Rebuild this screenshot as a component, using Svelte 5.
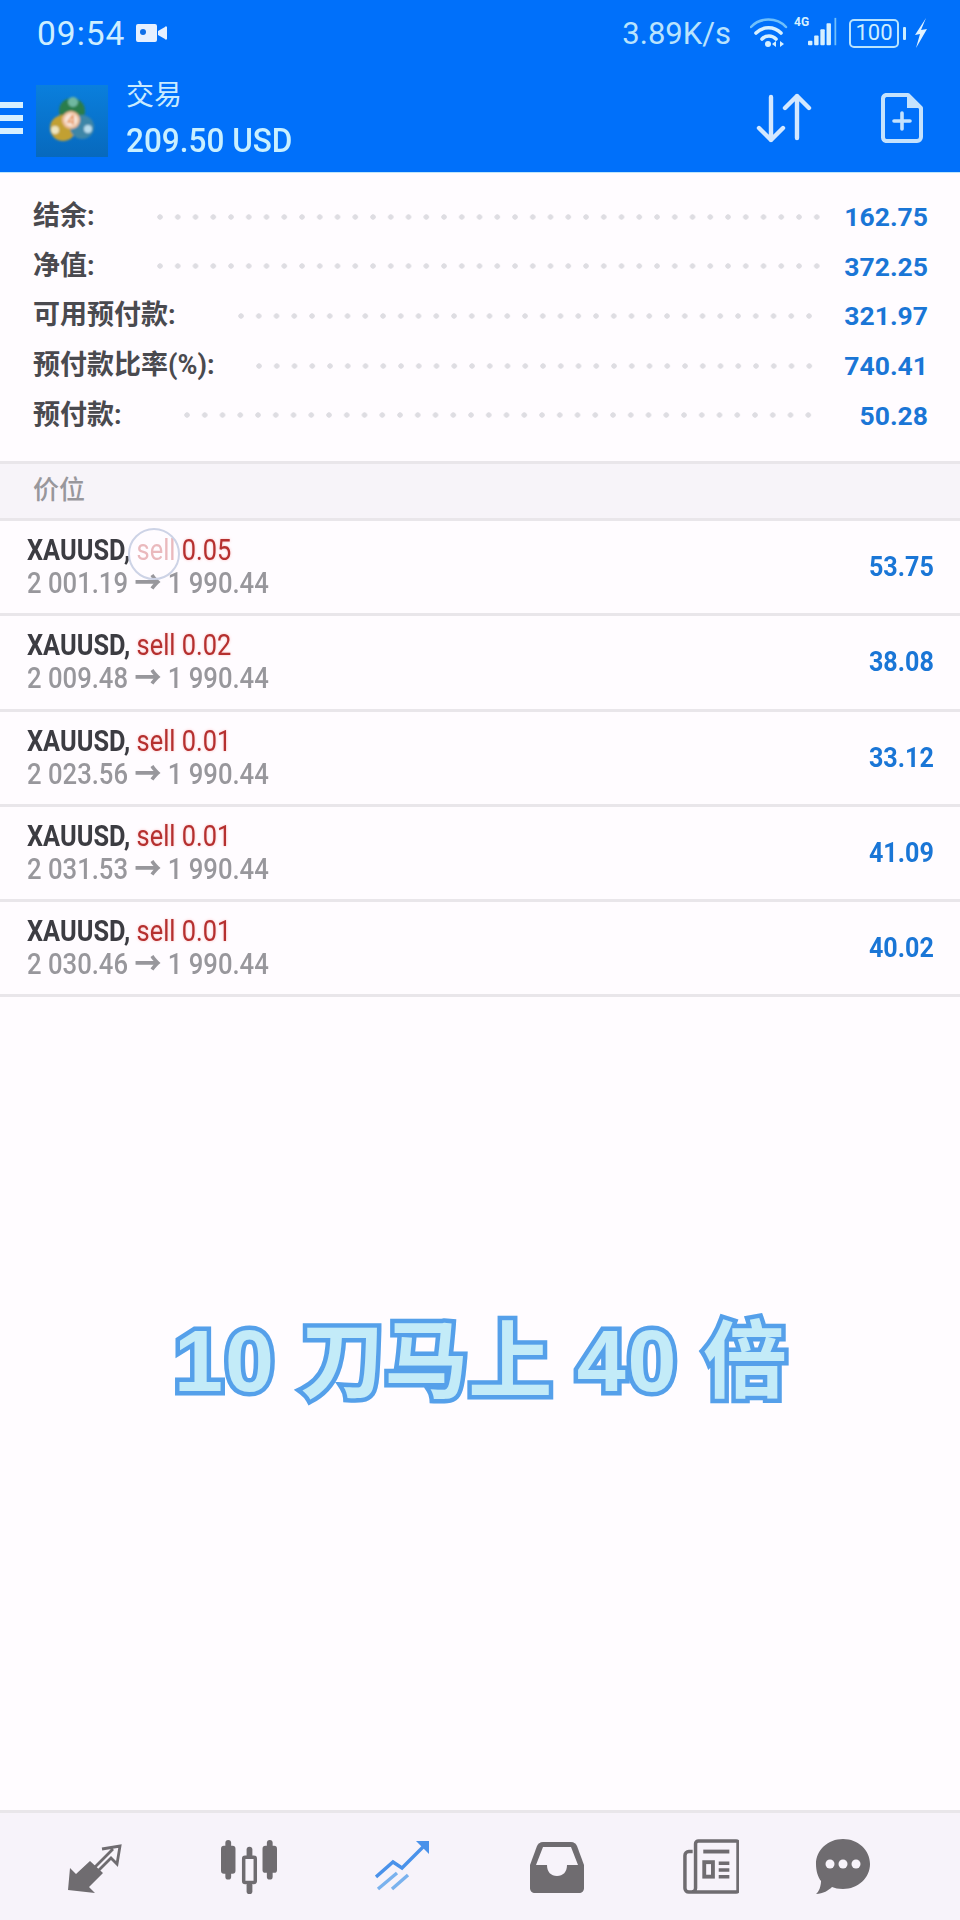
<script>
  const stats = [
    ['结余:', '162.75'],
    ['净值:', '372.25'],
    ['可用预付款:', '321.97'],
    ['预付款比率(%):', '740.41'],
    ['预付款:', '50.28']
  ];
  const trades = [
    ['0.05', '2 001.19', '53.75'],
    ['0.02', '2 009.48', '38.08'],
    ['0.01', '2 023.56', '33.12'],
    ['0.01', '2 031.53', '41.09'],
    ['0.01', '2 030.46', '40.02']
  ];
</script>

<div class="page">
  <header class="top">
    <div class="status">
      <span class="time">09:54</span>
      <svg class="cam" viewBox="0 0 31 18"><path d="M2 0h17a2 2 0 0 1 2 2v14a2 2 0 0 1-2 2H2a2 2 0 0 1-2-2V2a2 2 0 0 1 2-2zM22 7l7-4a1 1 0 0 1 2 1v10a1 1 0 0 1-2 1l-7-4z" fill="#e6f0ff"/><circle cx="7" cy="8" r="3" fill="#0f6fe8"/></svg>
      <span class="grow"></span>
      <span class="speed">3.89K/s</span>
      <svg class="wifi" viewBox="0 0 38 32" fill="none" stroke="#d6f0ff" stroke-linecap="round">
        <path d="M1 10C10 0 27 0 36 10" stroke="#6fc0fb" stroke-width="2.5"/>
        <path d="M6 16C13 9 24 9 31 16" stroke-width="3.6"/>
        <path d="M12 22c4-4 10-4 14 0" stroke-width="3.6"/>
        <circle cx="18" cy="27" r="3" fill="#d6f0ff" stroke="none"/>
        <path d="M26 24l-4 3 4 3zM30 24l4 3-4 3z" fill="#d6f0ff" stroke="none"/>
      </svg>
      <span class="net">
        <span class="g4">4G</span>
        <svg class="bars" viewBox="0 0 34 32" fill="#d6f0ff"><rect x="0" y="26" width="5" height="5" rx="1"/><rect x="7" y="20" width="5" height="11" rx="1"/><rect x="14" y="13" width="5" height="18" rx="1"/><rect x="21" y="6" width="5" height="25" rx="1"/><rect x="30" y="0" width="2" height="31" fill="#6fc0fb"/></svg>
      </span>
      <span class="batt">100</span>
      <span class="nub"></span>
      <svg class="bolt" viewBox="0 0 14 30"><path d="M12 0L1 17l5-1-4 14 11-19-6 1z" fill="#e2f3ff"/></svg>
    </div>
    <div class="appbar">
      <div class="burger"><i></i><i></i><i></i></div>
      <svg class="logo" viewBox="0 0 72 72">
        <defs>
          <linearGradient id="lg" x1="0" y1="0" x2="0" y2="1"><stop offset="0" stop-color="#0a7fdd"/><stop offset="1" stop-color="#0769bd"/></linearGradient>
          <filter id="soft" x="-10%" y="-10%" width="120%" height="120%"><feGaussianBlur stdDeviation="0.9"/></filter>
        </defs>
        <rect width="72" height="72" fill="url(#lg)"/>
        <g filter="url(#soft)">
          <circle cx="36" cy="26" r="13" fill="#2b7d4c"/>
          <circle cx="37" cy="17" r="5" fill="#6fb8a0"/>
          <circle cx="27" cy="43" r="13" fill="#c2a033"/>
          <circle cx="19" cy="45" r="4" fill="#ece5c0"/>
          <circle cx="46" cy="42" r="12" fill="#3e86a8"/>
          <circle cx="52" cy="44" r="4" fill="#b8dcec"/>
          <circle cx="35" cy="35" r="9" fill="#eebd98"/>
          <circle cx="35" cy="35" r="6.500" fill="#f6e6da"/>
          <path d="M37 30l-5 7h6M37 30v10" stroke="#e8935a" stroke-width="1.6" fill="none"/>
        </g>
      </svg>
      <div class="title">
        <div class="t1">交易</div>
        <div class="t2">209.50 USD</div>
      </div>
      <span class="grow"></span>
      <svg class="sort" viewBox="0 0 56 50" fill="none" stroke="#d3e8ff" stroke-width="4.4" stroke-linecap="round" stroke-linejoin="round">
        <path d="M15 4v43M3 35l12 12 12-12"/>
        <path d="M41 3v42M29 15L41 3l12 12"/>
      </svg>
      <svg class="file" viewBox="0 0 42 50" fill="none" stroke="#c4e2fd" stroke-width="4" stroke-linejoin="round">
        <path d="M5 2h22l13 13v29a4 4 0 0 1-4 4H5a4 4 0 0 1-3-4V6a4 4 0 0 1 3-4z"/>
        <path d="M26 2v13h14" fill="#c4e2fd" stroke="none"/>
        <path d="M13 28h16M21 20v16" stroke-width="3.6" stroke-linecap="round"/>
      </svg>
    </div>
  </header>

  <section class="stats">
    {#each stats as [label, value]}
      <div class="stat">
        <span class="label">{label}</span>
        <span class="dots"></span>
        <span class="value">{value}</span>
      </div>
    {/each}
  </section>

  <div class="section">价位</div>

  <section class="list">
    {#each trades as [vol, open, profit], i}
      <div class="trade">
        <div class="tinfo">
          <div class="l1">XAUUSD, <span class="sell" class:faded={i === 0}>sell</span> <span class="sell">{vol}</span></div>
          <div class="l2">{open} <b>→</b> 1 990.44</div>
        </div>
        <div class="profit">{profit}</div>
        {#if i === 0}<span class="touch"></span>{/if}
      </div>
    {/each}
  </section>

  <div class="caption"><span class="big"><span class="d">10</span> 刀马上 <span class="d">40</span> 倍</span></div>

  <nav class="tabs">
    <svg viewBox="0 0 56 50" class="tab"><path d="M1 48l2-22 6 6 14-13 13 12-14 14 6 6z" fill="#6f6c70"/><path d="M27 26l19-19M35 7l18-3-3 18-6-6-19 19" fill="none" stroke="#6f6c70" stroke-width="2.8"/></svg>
    <svg viewBox="0 0 58 56" class="tab" fill="#6f6c70"><rect x="0" y="6" width="15" height="29" rx="3"/><rect x="4.500" y="0" width="6" height="41" rx="3"/><rect x="43" y="6" width="15" height="28" rx="3"/><rect x="47.500" y="0" width="6" height="41" rx="3"/><rect x="23.500" y="18" width="12" height="26" rx="1.500" fill="none" stroke="#6f6c70" stroke-width="3.600"/><rect x="26.500" y="7" width="6" height="12" rx="3"/><rect x="26.500" y="44" width="6" height="12" rx="3"/></svg>
    <svg viewBox="0 0 56 54" class="tab" fill="none" stroke="#4a92ea" stroke-width="3.4"><path d="M1 37L18 22l9 6L50 5"/><path d="M41 1h13v13z" fill="#4a92ea" stroke="none"/><path d="M3 49l19-16M17 49l16-14" stroke="#7ab2ee" stroke-width="3.4"/></svg>
    <svg viewBox="0 0 56 52" class="tab"><path fill="#6f6c70" fill-rule="evenodd" d="M14 1h28c3 0 5 2 6 4l7 19v23c0 3-2 5-5 5H6c-3 0-5-2-5-5V24L8 5c1-2 3-4 6-4z"/><path fill="#f7f3fa" d="M14 6h28l7 18H38c0 7-4 11-10 11s-10-4-10-11H7z"/></svg>
    <svg viewBox="0 0 58 56" class="tab" fill="none" stroke="#6f6c70"><path d="M10 12H6a4 4 0 0 0-4 4v34a4 4 0 0 0 4 4h49a2 2 0 0 0 2-2V3a2 2 0 0 0-2-2H16a3 3 0 0 0-3 3v46a4 4 0 0 1-4 4" stroke-width="3.6"/><path d="M21 12h27" stroke-width="4"/><rect x="22" y="23" width="9" height="15" stroke-width="4"/><path d="M37 24h11M37 31h11M37 38h11" stroke-width="3.600"/></svg>
    <svg viewBox="0 0 56 56" class="tab"><path fill="#6f6c70" d="M28 0c15 0 27 11 27 25S43 50 28 50c-5 0-8-1-11-2-3 3-9 7-16 7 3-2 5-8 5-13-3-4-5-10-5-17C1 11 13 0 28 0z"/><circle cx="15" cy="25" r="4.500" fill="#f7f3fa"/><circle cx="28" cy="25" r="4.500" fill="#f7f3fa"/><circle cx="41" cy="25" r="4.500" fill="#f7f3fa"/></svg>
  </nav>
</div>

<style>
  :global(body) {
    margin: 0;
    background: #fffcff;
  }
  .page {
    width: 960px;
    height: 1920px;
    display: flex;
    flex-direction: column;
    background: #fffcff;
    font-family: Roboto, "Noto Sans CJK SC", sans-serif;
    overflow: hidden;
  }
  .grow { flex: 1; }

  .top {
    height: 173px;
    background: #0070fa;
    border-bottom: 1px solid #bfe6fb;
    box-sizing: border-box;
    flex: none;
    color: #d6f0ff;
  }
  .status {
    height: 66px;
    display: flex;
    align-items: center;
    padding: 0 32px 0 37px;
  }
  .time {
    font: 400 33.500px Roboto, sans-serif;
    letter-spacing: 1px;
    color: #cdeeff;
  }
  .cam { width: 31px; height: 18px; margin-left: 11px; }
  .speed {
    font: 400 31px Roboto, sans-serif;
    color: #b9e3fd;
  }
  .wifi { width: 38px; height: 32px; margin-left: 19px; }
  .net { position: relative; width: 44px; height: 32px; margin-left: 6px; display: block; }
  .g4 {
    position: absolute;
    left: 0;
    top: -2px;
    font: 700 12px Roboto, sans-serif;
    color: #d6f0ff;
  }
  .bars { position: absolute; left: 14px; top: 0; width: 30px; height: 30px; }
  .batt {
    margin-left: 11px;
    width: 50px;
    height: 29px;
    box-sizing: border-box;
    border: 2.5px solid #b9e3fd;
    border-radius: 5px;
    font: 400 22px/24px Roboto, sans-serif;
    text-align: center;
    color: #cdeeff;
  }
  .nub { width: 3px; height: 13px; margin-left: 4px; background: #cdeeff; border-radius: 1px; }
  .bolt { width: 14px; height: 30px; margin-left: 8px; }

  .appbar {
    height: 106px;
    display: flex;
    align-items: center;
    padding-right: 37px;
  }
  .burger {
    width: 23px;
    display: flex;
    flex-direction: column;
    gap: 7px;
    margin-top: -2px;
  }
  .burger i { display: block; height: 6px; background: #d6f0ff; }
  .logo { width: 72px; height: 72px; margin-left: 13px; margin-top: 3px; }
  .title { margin-left: 18px; margin-top: 1px; }
  .t1 { font-size: 28px; line-height: 36px; color: #c9ebff; }
  .t2 { font-size: 33px; line-height: 40px; margin-top: 7px; font-weight: 500; color: #c9f0ff; transform: scaleX(.955); transform-origin: left; white-space: nowrap; }
  .sort { width: 56px; height: 50px; margin-top: -2px; }
  .file { width: 42px; height: 50px; margin-left: 69px; margin-top: -2px; }

  .stats {
    padding: 19px 32px 21px 33px;
    border-bottom: 3px solid #e9e6ea;
    flex: none;
    height: 291px;
    box-sizing: border-box;
  }
  .stat {
    height: 49.6px;
    display: flex;
    align-items: center;
  }
  .label {
    font: 700 27px/40px Roboto, "Noto Sans CJK SC", sans-serif;
    color: #4a4a4f;
    margin-top: -1px;
  }
  .dots {
    flex: 1;
    height: 6px;
    margin-left: 62px;
    background: radial-gradient(circle at 3px 3px, #dedde2 2.4px, transparent 3px) 0 0 / 17.75px 6px repeat-x;
  }
  .stat:nth-child(4) .dots { margin-left: 41px; }
  .value {
    width: 108px;
    text-align: right;
    font: 700 26.500px Roboto, sans-serif;
    color: #1a76d6;
  }

  .section {
    flex: none;
    height: 57px;
    background: #f7f4f9;
    border-bottom: 3px solid #e9e6ea;
    box-sizing: border-box;
    padding: 0 33px;
    font: 500 26px/48px "Noto Sans CJK SC", sans-serif;
    color: #98979c;
  }

  .trade {
    position: relative;
    height: 95.3px;
    box-sizing: border-box;
    border-bottom: 3px solid #e9e6ea;
    display: flex;
    align-items: center;
    padding: 0 26px 0 27px;
  }
  .tinfo { flex: 1; }
  .l1, .l2 {
    font-size: 29.500px;
    line-height: 33px;
    font-weight: 500;
    transform: scaleX(.87);
    transform-origin: left;
    white-space: nowrap;
  }
  .l1 { color: #3c3c42; font-weight: 700; transform: scaleX(.86); }
  .l2 { color: #98979c; }
  .l2 b { font-weight: 900; font-size: 31px; line-height: 30px; }
  .sell { color: #b5302f; font-weight: 400; text-shadow: 0 0 3px rgba(240, 90, 90, .4); }
  .faded { color: #eab9bd; text-shadow: none; }
  .profit {
    font: 700 27px Roboto, sans-serif;
    color: #1a76d6;
    transform: scaleX(.93);
    transform-origin: right;
  }
  .touch {
    position: absolute;
    left: 128px;
    top: 7px;
    width: 48px;
    height: 48px;
    border: 2px solid #cdd3e6;
    border-radius: 50%;
  }

  .caption {
    flex: 1;
    display: flex;
    justify-content: center;
    padding-top: 299px;
    box-sizing: border-box;
  }
  .big {
    font: 700 84px/130px "Liberation Sans", "Noto Sans CJK SC", sans-serif;
    color: #c3ebf8;
    -webkit-text-stroke: 9px #55a0ea;
    paint-order: stroke fill;
    white-space: pre;
    height: 130px;
    word-spacing: 1px;
    margin-left: 1px;
  }
  .d { font-size: 88px; letter-spacing: 2px; }

  .tabs {
    flex: none;
    height: 110px;
    box-sizing: border-box;
    background: #f7f3fa;
    border-top: 3px solid #e9e6ea;
    display: flex;
    align-items: center;
    gap: 98px;
    padding: 0 0 0 67px;
  }
  .tab { width: 56px; height: 56px; flex: none; }
  .tab:last-child { margin-left: -22px; }
</style>
